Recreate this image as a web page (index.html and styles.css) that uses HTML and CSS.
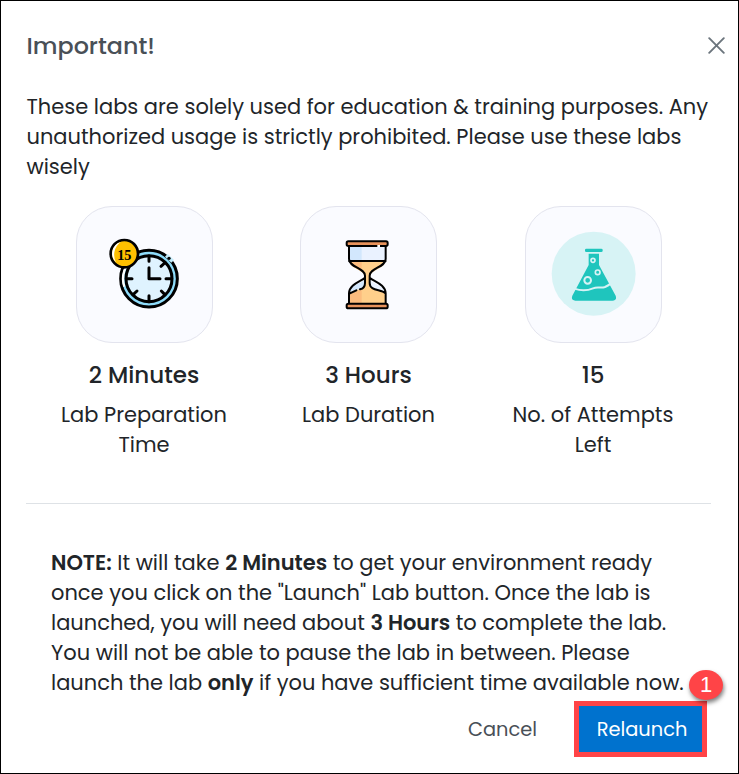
FILE: index.html
```html
<!DOCTYPE html>
<html lang="en">
<head>
  <meta charset="UTF-8">
  <title>Relaunch Lab</title>
  <link rel="stylesheet" href="styles.css">
</head>
<body>
  <div class="modal">
    <div class="modal-header">
      <h1>Important!</h1>
      <button class="close" aria-label="Close">
        <svg width="17" height="17" viewBox="0 0 17 17"><path d="M1.2 1.2 15.8 15.8M15.8 1.2 1.2 15.8" fill="none" stroke="#6c757d" stroke-width="1.9" stroke-linecap="round"/></svg>
      </button>
    </div>

    <p class="intro">
      These labs are solely used for education &amp; training purposes. Any<br>
      unauthorized usage is strictly prohibited. Please use these labs<br>
      wisely
    </p>

    <div class="stats">
      <div class="stat">
        <div class="tile">
          <svg width="150" height="150" viewBox="0 0 450 450">
            <circle cx="237" cy="236" r="85" fill="#8edcfa" stroke="#000" stroke-width="9"/>
            <path d="M163 260a76 76 0 0 1 28-86" fill="none" stroke="#fff" stroke-width="7"/>
            <circle cx="237" cy="236" r="69" fill="#dff3ff" stroke="#000" stroke-width="9"/>
            <path d="M289 166 308 184" stroke="#c4ecfb" stroke-width="12"/>
            <circle cx="297" cy="175" r="5" fill="#000"/>
            <path d="M237 168v16M237 287v18M169 236h17M288 236h17M284 189l-11 10M190 283l11-10M284 283l-10-10M237 203v33h33" fill="none" stroke="#000" stroke-width="9" stroke-linecap="round" stroke-linejoin="round"/>
            <circle cx="163" cy="161" r="41" fill="#ffc000" stroke="#000" stroke-width="8"/>
            <path d="M152 126a36 36 0 0 0-14 61 48 48 0 0 1 14-61" fill="#fff"/>
            <text class="badge-text" x="163" y="180" text-anchor="middle">15</text>
          </svg>
        </div>
        <h2>2 Minutes</h2>
        <p>Lab Preparation<br>Time</p>
      </div>
      <div class="stat">
        <div class="tile">
          <svg width="150" height="150" viewBox="0 0 450 450">
            <path d="M165 137h110v42c0 24-49 29-49 53s49 20 49 48v32H165v-32c0-28 49-24 49-48s-49-29-49-53z" fill="#eaf2ff"/>
            <path d="M165 137h38v46h-38zM165 278c0-25 44-26 48-44v35c-15 3-32 7-48 16z" fill="#d2e7fd"/>
            <path d="M166 183h108c-2 24-48 28-48 49v20c0 22 40 12 48 30v30H166v-30c8-18 48-8 48-30v-20c0-21-46-25-48-49z" fill="#ffcf8b"/>
            <path d="M166 183h37v29c-17-8-33-14-37-29zM166 282l37-14v44h-37z" fill="#fcbc7e"/>
            <g fill="none" stroke="#000" stroke-width="6" stroke-linecap="round" stroke-linejoin="round">
              <path d="M165 183h110M165 139v38c0 25 48 27 48 50v22c0 16-10 18-15 19M275 139v38c0 25-48 27-48 50v22c0 25 35 18 47 31M213 233c-12 11-48 20-48 47v31M227 233c12 11 48 20 48 47v31M187 271l-21 10"/>
              <rect x="158" y="124" width="123" height="14" rx="5" fill="#e8935c"/>
              <rect x="158" y="311" width="123" height="14" rx="5" fill="#e8935c"/>
            </g>
            <path d="M250 138h8" stroke="#fff" stroke-width="6"/>
          </svg>
        </div>
        <h2>3 Hours</h2>
        <p>Lab Duration</p>
      </div>
      <div class="stat">
        <div class="tile">
          <svg width="150" height="150" viewBox="0 0 450 450">
            <circle cx="224" cy="221" r="126" fill="#d7f3f5"/>
            <g fill="#1fc5bd">
              <rect x="198" y="146" width="53" height="10" rx="4"/>
              <path d="M209 161h31v34l50 92q5 15-10 15H169q-14-1-9-15l49-92z"/>
            </g>
            <path d="M166 266c17 6 40 6 56-1 14-6 24 1 36-4q9-4 17-10" fill="none" stroke="#d7f3f5" stroke-width="6"/>
            <g fill="none" stroke="#d7f3f5">
              <circle cx="222" cy="181" r="6" stroke-width="5"/>
              <circle cx="236" cy="217" r="7" stroke-width="5"/>
              <circle cx="206" cy="241" r="10" stroke-width="6"/>
            </g>
          </svg>
        </div>
        <h2>15</h2>
        <p>No. of Attempts<br>Left</p>
      </div>
    </div>

    <p class="note">
      <b>NOTE:</b> It will take <b>2 Minutes</b> to get your environment ready<br>
      once you click on the "Launch" Lab button. Once the lab is<br>
      launched, you will need about <b>3 Hours</b> to complete the lab.<br>
      You will not be able to pause the lab in between. Please<br>
      launch the lab <b>only</b> if you have sufficient time available now.
    </p>

    <div class="modal-footer">
      <button class="cancel">Cancel</button>
      <div class="relaunch-wrap">
        <button class="relaunch">Relaunch</button>
        <span class="step">1</span>
      </div>
    </div>
  </div>
</body>
</html>
```
FILE: styles.css
```css
* {
  box-sizing: border-box;
}
body {
  margin: 0;
  font-family: Poppins, Inter, sans-serif;
  font-size: 20.98px;
  line-height: 30px;
  color: #212529;
  background: #fff;
}
h1, h2, p {
  margin: 0;
}
p {
  white-space: nowrap;
}
button {
  border: 0;
  padding: 0;
  background: none;
  font: inherit;
}
.modal {
  width: 739px;
  height: 774px;
  border: 1px solid #000;
  padding: 26px 13px 0 25px;
}
.modal-header {
  display: flex;
  justify-content: space-between;
  align-items: center;
  height: 38px;
}
.modal-header h1 {
  padding-left: 0.5px;
  font-size: 23.8px;
  font-weight: 500;
  color: #495057;
}
.close {
  display: flex;
  margin-bottom: 2px;
}
.intro {
  margin-top: 27px;
  padding-left: 0.5px;
}

/* lab stats */
.stats {
  display: flex;
  justify-content: space-between;
  width: 685px;
  height: 322px;
  padding: 24px 6px 0;
  border-bottom: 1px solid #dee2e6;
}
.stat {
  width: 224px;
  text-align: center;
}
.tile {
  display: flex;
  align-items: center;
  justify-content: center;
  width: 137px;
  height: 137px;
  margin: 0 auto;
  border: 1px solid #e3e4ee;
  border-radius: 36px;
  background: #fafbff;
}
.tile svg {
  flex: none;
  margin-left: 1px;
}
.badge-text {
  font: bold 43px "Liberation Serif", serif;
}
.stat h2 {
  margin: 17px 0 10px;
  font-size: 23px;
  font-weight: 500;
}

.note {
  margin: 44px 0 0 25px;
}
.note b {
  font-weight: 600;
}

.modal-footer {
  display: flex;
  justify-content: flex-end;
  align-items: center;
  margin: 3px 18px 0 0;
}
.cancel {
  margin: 2px 37px 0 0;
  font-size: 19.4px;
  color: #495057;
}
.relaunch-wrap {
  position: relative;
}
.relaunch {
  display: block;
  width: 133px;
  height: 56px;
  padding: 2px 0 0 3px;
  border: 5px solid #ff4447;
  background: #0072ce;
  font-size: 19.4px;
  color: #fff;
}
.step {
  position: absolute;
  top: -31px;
  left: 115px;
  width: 34px;
  height: 30px;
  border-radius: 50%;
  background: #ff4447;
  box-shadow: 1px 3px 4px rgba(0, 0, 0, 0.5);
  color: #fff;
  font: 22px/30px "Liberation Sans", sans-serif;
  text-align: center;
}
```
